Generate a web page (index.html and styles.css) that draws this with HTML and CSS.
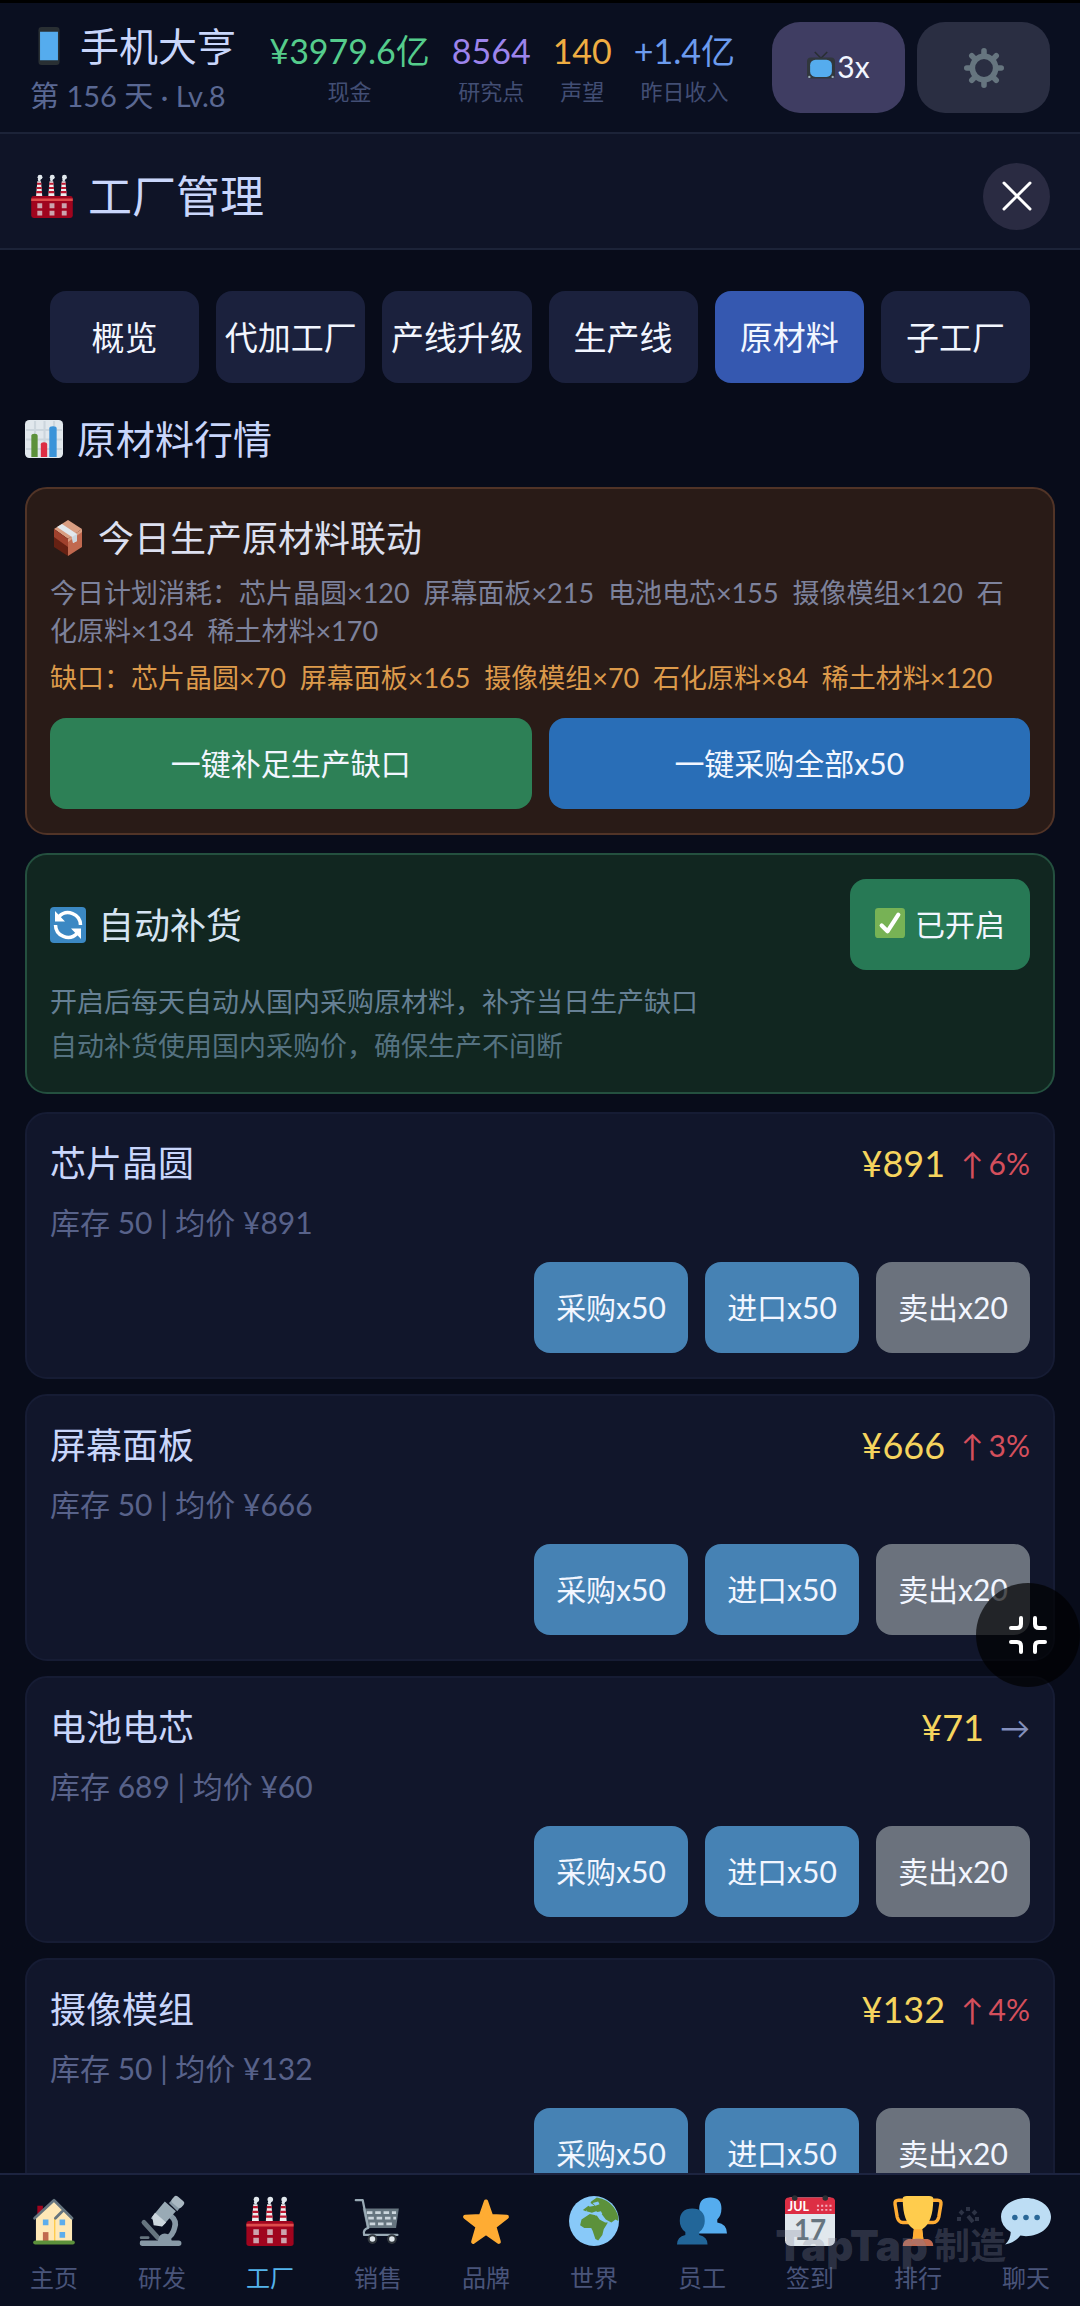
FILE: index.html
```html
<!DOCTYPE html>
<html lang="zh-CN">
<head>
    <meta charset="UTF-8">
    <meta name="viewport" content="width=device-width, initial-scale=1.0">
    <title>手机大亨 - 工厂管理</title>
    <link rel="stylesheet" href="styles.css">
</head>
<body>
    <!-- shared shapes -->
    <svg class="defs" aria-hidden="true">
        <symbol id="factory" viewBox="0 0 36 36">
            <path fill="#EEE" d="M5 18 6 6h3l1 12zM15 18l1-12h3l1 12zM25 18l1-12h3l1 12z"/>
            <path stroke="#BE1931" stroke-width="1.7" d="M5.7 8h3.6M5.4 11.4h4.2M5.1 14.8h4.8M15.7 8h3.6M15.4 11.4h4.2M15.1 14.8h4.8M25.7 8h3.6M25.4 11.4h4.2M25.1 14.8h4.8"/>
            <g fill="#E1E8ED"><circle cx="8.2" cy="2.6" r="2"/><circle cx="7.6" cy="4.7" r="1.2"/><circle cx="18.2" cy="2.6" r="2"/><circle cx="17.6" cy="4.7" r="1.2"/><circle cx="28.2" cy="2.6" r="2"/><circle cx="27.6" cy="4.7" r="1.2"/></g>
            <rect x="1" y="18" width="34" height="18" rx="2" fill="#A0041E"/>
            <path fill="#DD4B4B" d="M1 20h34v2H1z"/>
            <path fill="#CCA4AE" d="M6 24h4v4H6zM16 24h4v4h-4zM26 24h4v4h-4zM6 30h4v4H6zM16 30h4v4h-4zM26 30h4v4h-4z"/>
        </symbol>
    </svg>

    <div class="app">
        <header class="topbar">
            <div class="brand">
                <h1>
                    <svg class="brand-icon" viewBox="0 0 36 36" aria-hidden="true"><rect x="8" width="20" height="36" rx="3" fill="#292F33"/><path fill="#55ACEE" d="M9.500 4.500h17v27h-17z"/></svg>
                    手机大亨
                </h1>
                <p>第 156 天 · Lv.8</p>
            </div>
            <dl class="stats">
                <div><dd class="cash">¥3979.6亿</dd><dt>现金</dt></div>
                <div><dd class="research">8564</dd><dt>研究点</dt></div>
                <div><dd class="fame">140</dd><dt>声望</dt></div>
                <div><dd class="income">+1.4亿</dd><dt>昨日收入</dt></div>
            </dl>
            <div class="top-actions">
                <button class="speed">
                    <svg viewBox="0 0 36 36" aria-hidden="true"><path d="M10 0l8 8 8-8" fill="none" stroke="#292F33" stroke-width="2"/><rect y="7" width="36" height="27" rx="5" fill="#31373D"/><rect x="4" y="10" width="28" height="22" rx="7" fill="#55ACEE"/><circle cx="3" cy="32" r="1.500" fill="#99AAB5"/><circle cx="33" cy="32" r="1.500" fill="#99AAB5"/></svg>3x
                </button>
                <button class="settings" aria-label="设置">
                    <svg viewBox="0 0 36 36" aria-hidden="true"><circle cx="18" cy="18" r="10.500" fill="none" stroke="#66757F" stroke-width="5"/><path stroke="#66757F" stroke-width="5" stroke-linecap="round" d="M18 2.500v4M18 29.500v4M2.500 18h4M29.500 18h4M7 7l3 3M26 26l3 3M7 29l3-3M26 10l3-3"/></svg>
                </button>
            </div>
        </header>

        <div class="page-title">
            <svg aria-hidden="true"><use href="#factory"/></svg>
            <h2>工厂管理</h2>
            <button class="close" aria-label="关闭">
                <svg viewBox="0 0 30 30" aria-hidden="true"><path d="M2 2l26 26M28 2L2 28"/></svg>
            </button>
        </div>

        <main>
            <div class="tabs">
                <button>概览</button>
                <button>代加工厂</button>
                <button>产线升级</button>
                <button>生产线</button>
                <button class="active">原材料</button>
                <button>子工厂</button>
            </div>

            <h3 class="section-title">
                <svg viewBox="0 0 36 36" aria-hidden="true"><rect width="36" height="36" rx="4" fill="#E1E8ED"/><path stroke="#CCD6DD" stroke-width="2" d="M9.500 1v34M18.500 1v34M27.500 1v34M1 9.500h34M1 18.500h34M1 27.500h34"/><path fill="#5C913B" d="M6 35V15q0-2 3-2t3 2v20z"/><path fill="#DD2E44" d="M15 35V23q0-2 3-2t3 2v12z"/><path fill="#3B94D9" d="M23 35V8q0-2 3.500-2T30 8v27z"/></svg>
                原材料行情
            </h3>

            <section class="panel plan">
                <h4>
                    <svg viewBox="0 0 36 36" aria-hidden="true"><path fill="#D99E82" d="M18 0 32 9 18 19 4 9z"/><path fill="#662113" d="M4 9l14 10v17L4 27z"/><path fill="#C1694F" d="M32 9 18 19v17l14-9z"/><path fill="#A0412D" d="M4 9l14 10v8L4 17z"/><path fill="#D99E82" d="M32 9 18 19v3l14-10z"/><path fill="#E1E8ED" d="M12 4 27 14v7l-4 2-1-6L7 7z"/><path fill="#CCD6DD" d="M22 17l5-3v7l-4 2z"/></svg>
                    今日生产原材料联动
                </h4>
                <p class="usage">今日计划消耗：芯片晶圆×120  屏幕面板×215  电池电芯×155  摄像模组×120  石化原料×134  稀土材料×170</p>
                <p class="shortage">缺口：芯片晶圆×70  屏幕面板×165  摄像模组×70  石化原料×84  稀土材料×120</p>
                <div class="plan-actions">
                    <button class="fill">一键补足生产缺口</button>
                    <button class="buy-all">一键采购全部x50</button>
                </div>
            </section>

            <section class="panel auto">
                <div class="row">
                    <h4>
                        <svg viewBox="0 0 36 36" aria-hidden="true"><rect width="36" height="36" rx="4" fill="#3B88C3"/><path fill="none" stroke="#FFF" stroke-width="3.500" d="M9 9.500A12.500 12.500 0 0 1 30.500 18M27 26.500A12.500 12.500 0 0 1 5.500 18"/><path fill="#FFF" d="M5 4v10.500h10zM31 32V21.500H21z"/></svg>
                        自动补货
                    </h4>
                    <button class="toggle">
                        <svg viewBox="0 0 36 36" aria-hidden="true"><rect width="36" height="36" rx="4" fill="#77B255"/><path fill="none" stroke="#FFF" stroke-width="5" stroke-linecap="round" stroke-linejoin="round" d="M8 21l7 7L28 8"/></svg>
                        已开启
                    </button>
                </div>
                <p>开启后每天自动从国内采购原材料，补齐当日生产缺口</p>
                <p class="note">自动补货使用国内采购价，确保生产不间断</p>
            </section>

            <section class="panel material">
                <div class="row"><h4>芯片晶圆</h4><div class="quote"><span class="price">¥891</span><span class="trend up"><span>↑</span>6%</span></div></div>
                <p>库存 50 | 均价 ¥891</p>
                <div class="trade"><button>采购x50</button><button>进口x50</button><button class="sell">卖出x20</button></div>
            </section>

            <section class="panel material">
                <div class="row"><h4>屏幕面板</h4><div class="quote"><span class="price">¥666</span><span class="trend up"><span>↑</span>3%</span></div></div>
                <p>库存 50 | 均价 ¥666</p>
                <div class="trade"><button>采购x50</button><button>进口x50</button><button class="sell">卖出x20</button></div>
            </section>

            <section class="panel material">
                <div class="row"><h4>电池电芯</h4><div class="quote"><span class="price">¥71</span><span class="trend">→</span></div></div>
                <p>库存 689 | 均价 ¥60</p>
                <div class="trade"><button>采购x50</button><button>进口x50</button><button class="sell">卖出x20</button></div>
            </section>

            <section class="panel material">
                <div class="row"><h4>摄像模组</h4><div class="quote"><span class="price">¥132</span><span class="trend up"><span>↑</span>4%</span></div></div>
                <p>库存 50 | 均价 ¥132</p>
                <div class="trade"><button>采购x50</button><button>进口x50</button><button class="sell">卖出x20</button></div>
            </section>
        </main>

        <nav class="bottom-nav">
            <a href="#home">
                <svg viewBox="0 0 36 36" aria-hidden="true"><path fill="#A0041E" d="M6 7h4v7H6z"/><path fill="#FFE8B6" d="M5 33V15L18 3l13 12v18z"/><path fill="#FFCC4D" d="M18 16h1v17h-1z"/><path fill="none" stroke="#66757F" stroke-width="2" stroke-linecap="round" stroke-linejoin="round" d="M4 16 18 3l13 13M19 16l5-5"/><path fill="#5DADEC" d="M10 17h4v4h-4zM22 17h4v4h-4zM22 26h4v4h-4z"/><path fill="#C1694F" d="M10 26h4v7h-4z"/><rect x="3" y="32" width="30" height="3" rx="1.500" fill="#5C913B"/></svg>
                主页
            </a>
            <a href="#research">
                <svg viewBox="0 0 36 36" aria-hidden="true"><path fill="none" stroke="#66757F" stroke-width="3.500" stroke-linecap="round" d="M5 19l10 11"/><path fill="none" stroke="#8899A6" stroke-width="4" d="M24 14q5 4 3 9-1 5-6 8"/><path fill="#8899A6" d="M3 32h12q1-5 5-5t5 5h5q2 0 2 2t-2 2H4q-2 0-2-2t1-2z"/><path stroke="#66757F" stroke-width="2" stroke-linecap="round" d="M3 30h5"/><path fill="#99AAB5" d="M20 4l8 7-10 11-8-6z"/><path fill="#CCD6DD" d="M13 12l8 7-3 3-6-1-1-6z"/><path fill="#8899A6" d="M23 5l3-3 6 5-3 4z"/><rect x="25" y="1" width="9" height="6" rx="2" transform="rotate(40 29 4)" fill="#AAB8C2"/></svg>
                研发
            </a>
            <a href="#factory-page" class="active">
                <svg aria-hidden="true"><use href="#factory"/></svg>
                工厂
            </a>
            <a href="#sales">
                <svg viewBox="0 0 36 36" aria-hidden="true"><path fill="#66757F" d="M7 9h26l-2 14H10z"/><path fill="none" stroke="#99AAB5" stroke-width="1.600" stroke-linecap="round" stroke-linejoin="round" d="M2 3h5l4 20q-4 1-3 5h24"/><path stroke="#CCD6DD" stroke-width="2" stroke-dasharray="4 2" d="M10 12h21M11 16h20M12 20h18"/><circle cx="14" cy="31" r="3.500" fill="#31373D"/><circle cx="28" cy="31" r="3.500" fill="#31373D"/><circle cx="14" cy="31" r="2" fill="#E1E8ED"/><circle cx="28" cy="31" r="2" fill="#E1E8ED"/></svg>
                销售
            </a>
            <a href="#brand">
                <svg viewBox="0 0 36 36" aria-hidden="true"><path fill="#FFAC33" stroke="#FFAC33" stroke-width="3" stroke-linejoin="round" d="M18 4l3.700 10.500L33 15l-9 7 3.200 11L18 26.500 8.800 33 12 22l-9-7 11.300-.5z"/></svg>
                品牌
            </a>
            <a href="#world">
                <svg viewBox="0 0 36 36" aria-hidden="true"><circle cx="18" cy="18" r="18" fill="#88C9F9"/><path fill="#5C913B" d="M16 4l4-3q8 1 12 7 4 5 3.500 10l-2-1-3 2-4-2-3-4-4-2-3 1-4-1 1-3 5-1-3-2zM9 17l6-4 5 1 2 3 4 2h2l-3 5-1 4-3 4-2-1-2-6-1-2H11l-3-2z"/><path fill="#88C9F9" d="M18 12l5-1 1 2-5 1zM17 5l4-1 1 2-3 1z"/><path fill="#5C913B" d="M10 10l4-3 1 1-3 3z"/></svg>
                世界
            </a>
            <a href="#staff">
                <svg viewBox="0 0 36 36" aria-hidden="true"><path fill="#55ACEE" d="M16 9q0-8 8-8t8 8q0 5-3 8v2q7 1 7 8H15v-8l4-1v-2q-3-2-3-7z"/><path fill="#226699" d="M2 18q0-9 9-9t9 9q0 5-4 8v2q6 1 6 7H0q0-6 6-7v-2q-4-3-4-8z"/></svg>
                员工
            </a>
            <a href="#checkin">
                <svg viewBox="0 0 36 36" aria-hidden="true"><rect y="1" width="36" height="35" rx="4" fill="#E1E8ED"/><path fill="#DD2E44" d="M0 13V4q0-3 3-3h30q3 0 3 3v9z"/><circle cx="7" cy="1.500" r="2" fill="#292F33"/><circle cx="29" cy="1.500" r="2" fill="#292F33"/><path stroke="#F4ABBA" stroke-width="1.300" stroke-dasharray="1.500 1.500" d="M23 7h11M23 10h11"/><text x="2" y="11" class="cal-month">JUL</text><text x="18" y="32" class="cal-day">17</text></svg>
                签到
            </a>
            <a href="#rank">
                <svg viewBox="0 0 36 36" aria-hidden="true"><path fill="none" stroke="#FFAC33" stroke-width="2.500" stroke-linejoin="round" d="M9 3H4q-3 0-2.500 3L3 15q1 4 4 4h5M27 3h5q3 0 2.500 3L33 15q-1 4-4 4h-5"/><path fill="#FFCC4D" d="M7 2q0-2 3-2h16q3 0 3 2 0 17-8 22l1 8h-8l1-8Q7 19 7 2z"/><path fill="#FFAC33" d="M15 24h6l1 8h-8z"/><path fill="#C1694F" d="M7 36q0-4 4-5h14q4 1 4 5z"/></svg>
                排行
            </a>
            <a href="#chat">
                <svg viewBox="0 0 36 36" aria-hidden="true"><path fill="#BDDDF4" d="M18 1.500c10 0 18 6 18 13.500s-8 14-18 14l-4-.5q-4 5-11 6.500 4-4 4-9-7-4-7-11C0 7.500 8 1.500 18 1.500z"/><circle cx="10" cy="15.500" r="2" fill="#2A6797"/><circle cx="18" cy="15.500" r="2" fill="#2A6797"/><circle cx="26" cy="15.500" r="2" fill="#2A6797"/></svg>
                聊天
            </a>
            <div class="watermark">
                TapTap<span>制造</span>
                <svg viewBox="0 0 24 20" aria-hidden="true"><path d="M12 1v4M4 5l3 3M20 5l-3 3M1 13h4M12 10l5 6M19 13h4"/></svg>
            </div>
        </nav>
    </div>

    <button class="shrink" aria-label="退出全屏">
        <svg viewBox="0 0 38 38" aria-hidden="true"><path d="M12 2v6q0 4-4 4H2M26 2v6q0 4 4 4h6M2 26h6q4 0 4 4v6M36 26h-6q-4 0-4 4v6"/></svg>
    </button>
</body>
</html>
```

FILE: styles.css
```css
* { box-sizing: border-box; }
body { margin: 0; background-color: #080c1a; color: #c9d6fb; font-family: Lato, "Noto Sans CJK SC", sans-serif; font-size: 30px; }
h1, h2, h3, h4, p, dl, dd { margin: 0; font-weight: normal; }
button { border: none; padding: 0 0 3px; border-radius: 16px; color: #f2f6ff; font-family: inherit; font-size: 30px; cursor: pointer; }
svg { flex: none; overflow: visible; }
.defs { position: absolute; width: 0; height: 0; }

.app { display: flex; flex-direction: column; height: 100vh; border-top: 3px solid #000; }

/* top bar */
.topbar { display: flex; align-items: center; flex: none; height: 131px; padding: 0 30px; background-color: #0a0f20; border-bottom: 2px solid #1c2338; }
.brand { flex: 1; padding-top: 6px; white-space: nowrap; }
.brand h1 { display: flex; align-items: center; gap: 12px; font-size: 39px; line-height: 50px; }
.brand-icon { width: 38px; height: 38px; }
.brand p { color: #5a6893; font-size: 29px; line-height: 50px; }
.stats { display: flex; gap: 22px; margin-right: 37px; padding-top: 5px; text-align: center; white-space: nowrap; }
.stats div { display: flex; flex-direction: column; }
.stats dd { font-size: 34px; line-height: 44px; }
.stats dt { order: 1; color: #424e74; font-size: 22px; line-height: 38px; }
.cash { color: #55cc8c; }
.research { color: #9c84ec; }
.fame { color: #efad42; }
.income { color: #6c9bee; }
.top-actions { display: flex; gap: 12px; }
.top-actions button { display: flex; align-items: center; justify-content: center; width: 133px; height: 91px; border-radius: 28px; }
.top-actions .speed { background-color: #3f3d62; }
.speed svg { width: 28px; height: 28px; margin-right: 2px; }
.top-actions .settings { padding: 0; background-color: #2a2e42; }
.settings svg { width: 40px; height: 40px; }

/* page title */
.page-title { display: flex; align-items: center; flex: none; gap: 14px; height: 116px; padding: 10px 30px 0; background-color: #0f1427; border-bottom: 2px solid #1c2338; }
.page-title svg { width: 44px; height: 44px; }
.page-title h2 { flex: 1; font-size: 44px; line-height: 60px; }
.page-title .close { display: flex; align-items: center; justify-content: center; width: 67px; height: 67px; padding: 0; border-radius: 50%; background-color: #2a2b42; }
.page-title .close svg { width: 30px; height: 30px; fill: none; stroke: #fff; stroke-width: 3; stroke-linecap: round; }

main { flex: 1; min-height: 0; padding: 41px 25px 0; overflow-y: auto; scrollbar-width: none; }
.tabs { display: grid; grid-template-columns: repeat(6, 1fr); gap: 17px; padding: 0 25px; }
.tabs button { height: 92px; background-color: #1b213d; font-size: 33px; white-space: nowrap; }
.tabs .active { background-color: #3558b0; }
.section-title { display: flex; align-items: center; gap: 14px; margin: 32px 0 24px; font-size: 39px; line-height: 48px; }
.section-title svg { width: 38px; height: 38px; }

/* cards */
.panel { margin-bottom: 18px; padding: 24px 23px; border: 2px solid; border-radius: 22px; }
.panel h4 { display: flex; align-items: center; gap: 12px; font-size: 36px; line-height: 50px; }
.panel h4 svg { width: 36px; height: 36px; }
.row { display: flex; align-items: center; justify-content: space-between; }

.plan { background-color: #291b17; border-color: #513427; }
.plan h4 { margin-bottom: 11px; color: #dde0f0; }
.plan p { padding-right: 12px; font-size: 27px; line-height: 38px; white-space: pre-wrap; }
.usage { color: #7d829c; }
.plan .shortage { margin: 9px 0 21px; color: #dc9a4b; }
.plan-actions { display: grid; grid-template-columns: 1fr 1fr; gap: 17px; }
.plan-actions button { height: 91px; }
.fill { background-color: #2d8056; }
.buy-all { background-color: #296eb7; }

.auto { background-color: #112620; border-color: #24503f; }
.auto h4 { color: #d6e4f2; }
.auto .row { margin-bottom: 10px; }
.auto p { color: #668094; font-size: 27px; line-height: 44px; }
.auto .note { color: #557280; }
.toggle { display: flex; align-items: center; justify-content: center; gap: 10px; width: 180px; height: 91px; background-color: #277955; }
.toggle svg { width: 30px; height: 30px; }

.material { margin-bottom: 15px; background-color: #11162b; border-color: #161c34; }
.material h4 { line-height: 50px; }
.material p { margin: 14px 0 20px; color: #58628a; line-height: 40px; }
.quote { display: flex; align-items: center; gap: 16px; line-height: 50px; }
.price { color: #f5d45e; font-size: 36px; }
.trend { display: flex; gap: 5px; color: #8490bd; }
.up { color: #d44f5c; }
.trade { display: flex; justify-content: flex-end; gap: 17px; }
.trade button { width: 154px; height: 91px; background-color: #4682b4; }
.trade .sell { background-color: #6b727d; }

/* bottom nav */
.bottom-nav { position: relative; display: grid; grid-template-columns: repeat(10, 1fr); flex: none; height: 133px; border-top: 2px solid #1d2440; background-color: #0a0f20; }
.bottom-nav a { display: flex; flex-direction: column; align-items: center; gap: 14px; padding-top: 21px; color: #49547a; font-size: 24px; line-height: 36px; text-decoration: none; }
.bottom-nav a svg { width: 50px; height: 50px; }
.bottom-nav .active { color: #55b4ec; }
.cal-month { fill: #fff; font-size: 9px; font-weight: bold; }
.cal-day { fill: #66757f; font-size: 20px; font-weight: bold; text-anchor: middle; }

.watermark { position: absolute; right: 74px; bottom: 36px; display: flex; align-items: center; gap: 6px; color: rgba(130, 135, 155, 0.3); font-family: Inter, "Noto Sans CJK SC", sans-serif; font-size: 42px; font-weight: 900; line-height: 48px; pointer-events: none; }
.watermark span { font-size: 36px; font-weight: bold; }
.watermark svg { position: absolute; right: 26px; top: -16px; width: 24px; height: 20px; fill: none; stroke: rgba(130, 135, 155, 0.3); stroke-width: 4; }

/* floating button over the list */
.shrink { position: fixed; right: 0; top: 1583px; display: flex; align-items: center; justify-content: center; width: 104px; height: 104px; padding: 0; border-radius: 50%; background-color: rgba(0, 0, 0, 0.68); }
.shrink svg { width: 38px; height: 38px; fill: none; stroke: #fff; stroke-width: 4; stroke-linecap: round; }
```
